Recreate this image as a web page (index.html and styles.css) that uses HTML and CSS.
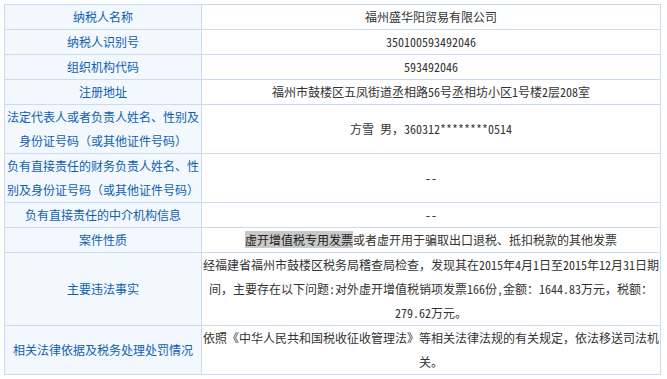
FILE: index.html
```html
<!DOCTYPE html>
<html lang="zh-CN">
<head>
<meta charset="utf-8">
<title>案件信息</title>
<link rel="stylesheet" href="styles.css">
</head>
<body>
<div class="info-grid">
  <div class="label">纳税人名称</div>
  <div class="value">福州盛华阳贸易有限公司</div>

  <div class="label">纳税人识别号</div>
  <div class="value">350100593492046</div>

  <div class="label">组织机构代码</div>
  <div class="value">593492046</div>

  <div class="label">注册地址</div>
  <div class="value">福州市鼓楼区五凤街道丞相路56号丞相坊小区1号楼2层208室</div>

  <div class="label">法定代表人或者负责人姓名、性别及身份证号码（或其他证件号码）</div>
  <div class="value">方雪 男，360312********0514</div>

  <div class="label">负有直接责任的财务负责人姓名、性别及身份证号码（或其他证件号码）</div>
  <div class="value">--</div>

  <div class="label">负有直接责任的中介机构信息</div>
  <div class="value">--</div>

  <div class="label">案件性质</div>
  <div class="value"><p class="text"><span class="hl">虚开增值税专用发票</span>或者虚开用于骗取出口退税、抵扣税款的其他发票</p></div>

  <div class="label">主要违法事实</div>
  <div class="value"><p class="text">经福建省福州市鼓楼区税务局稽查局检查，发现其在2015年4月1日至2015年12月31日期间，主要存在以下问题:对外虚开增值税销项发票166份,金额：1644.83万元，税额：279.62万元。</p></div>

  <div class="label">相关法律依据及税务处理处罚情况</div>
  <div class="value"><p class="text">依照《中华人民共和国税收征收管理法》等相关法律法规的有关规定，依法移送司法机关。</p></div>
</div>
</body>
</html>
```

FILE: styles.css
```css
html, body {
  margin: 0;
  padding: 0;
  background: #ffffff;
}

body {
  padding: 4px;
}

.info-grid {
  display: grid;
  grid-template-columns: 196px 458px;
  gap: 1px;
  padding: 1px;
  width: max-content;
  background: #c8dbf0;
  font-size: 12px;
  line-height: 24px;
}

.label,
.value {
  display: flex;
  align-items: center;
  justify-content: center;
  text-align: center;
  min-height: 24px;
}

.label {
  background: #f2f8fd;
  color: #1060b0;
  font-family: "Noto Sans CJK SC", "Noto Sans", sans-serif;
  padding: 0 2px;
}

.value {
  background: #ffffff;
  color: #333333;
  font-family: "Noto Sans Mono CJK SC", "Noto Sans CJK SC", "Liberation Sans", sans-serif;
}

.text {
  margin: 0;
  width: 100%;
}

.hl {
  background: #c8c8c8;
  color: #222222;
}
```
